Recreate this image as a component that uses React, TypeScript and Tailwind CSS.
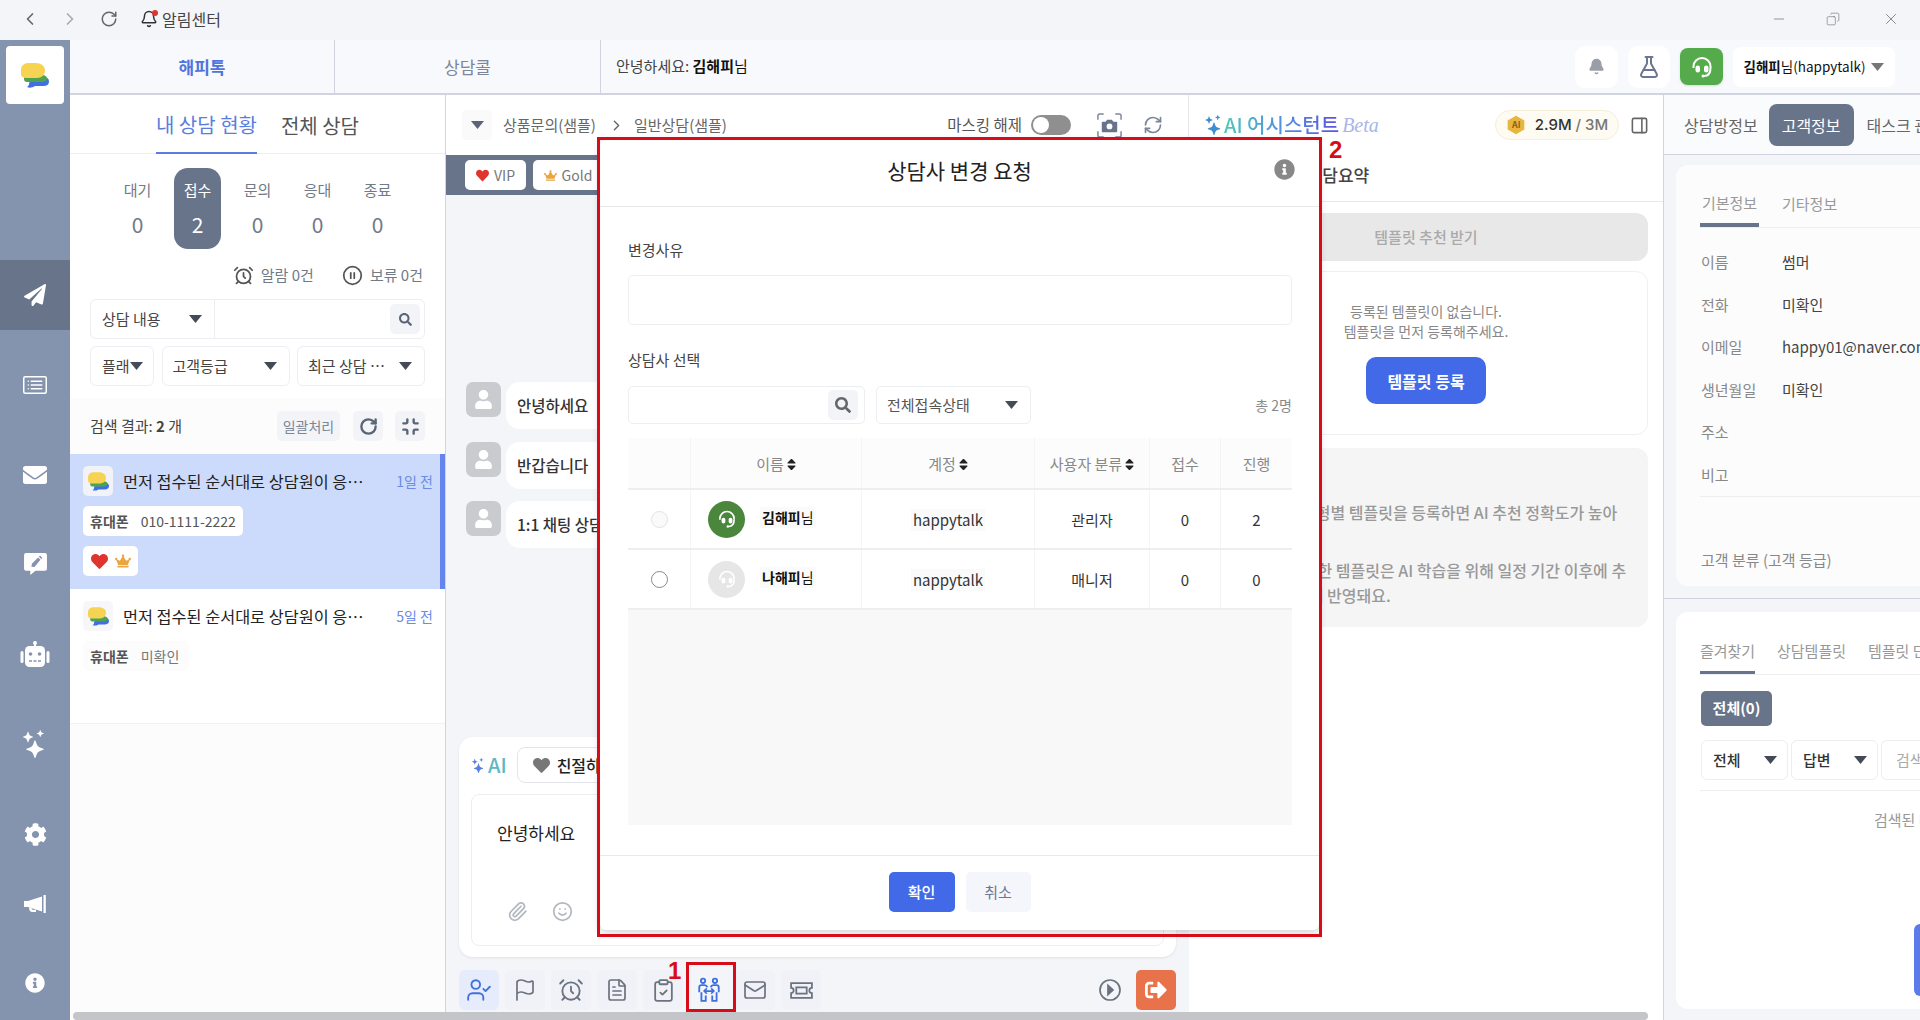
import {
  AlarmClock,
  ChevronLeft,
  ChevronRight,
  ClipboardCheck,
  Copy,
  FileText,
  Flag,
  FlaskConical,
  Mail,
  Minimize,
  Minus,
  Paperclip,
  PanelRight,
  RefreshCw,
  RotateCw,
  Smile,
  UserCheck,
  X,
  CirclePause,
  Bell,
} from "lucide-react";
import {
  FaCog,
  FaCrown,
  FaEnvelope,
  FaHeart,
  FaInfoCircle,
  FaPaperPlane,
  FaSearch,
  FaSignOutAlt,
  FaSortDown,
  FaSortUp,
  FaUser,
} from "react-icons/fa";
import { BsCardList, BsStars } from "react-icons/bs";

function Logo({ className }: { className?: string }) {
  return (
    <svg viewBox="0 0 28 25" className={className}>
      <path d="M10 14h12c4 0 6 1.500 6 4.500S26 23 22 23h-8c-3 2-6 2-8 1 1.500-1 2-2 2-3z" fill="#3f6fe0" />
      <path d="M3 12h18c3 0 5 1.500 5 3.500 0 2.500-2.500 3.500-5 3.500H6c-2 0-3-1-3-3z" fill="#4fa34f" />
      <path d="M7 0h8c5 0 9 3 9 7.500S20.500 15 16 15H5c-3 0-5-1.500-5-4V6.500C0 3 3 0 7 0z" fill="#f7d354" />
    </svg>
  );
}

function Headset({ className }: { className?: string }) {
  return (
    <svg viewBox="0 0 24 24" className={className} fill="none" stroke="currentColor" strokeWidth="2">
      <path d="M3.500 13v-1.500a8.500 8.500 0 0 1 17 0V13" />
      <rect x="5.500" y="10.500" width="4.500" height="7" rx="2.200" fill="currentColor" stroke="none" />
      <rect x="14" y="10.500" width="4.500" height="7" rx="2.200" fill="currentColor" stroke="none" />
      <path d="M20.500 13c0 5-2.500 8-6.500 8" />
      <circle cx="13" cy="21" r="1.500" fill="currentColor" stroke="none" />
    </svg>
  );
}

function Transfer({ className }: { className?: string }) {
  return (
    <svg viewBox="0 0 24 24" className={className} fill="none" stroke="currentColor" strokeWidth="1.700">
      <circle cx="6.500" cy="3.500" r="2" />
      <circle cx="17.500" cy="3.500" r="2" />
      <path d="M3 14V9.500C3 8 4 7.500 5 7.500h3c1 0 2 .5 2.500 2" />
      <path d="M21 14V9.500c0-1.500-1-2-2-2h-3c-1 0-2 .5-2.500 2" />
      <path d="M5 14v8h4v-5M19 14v8h-4v-5" />
      <path d="M7.500 13h9M10 10.500 7.500 13l2.500 2.500M14 10.500l2.500 2.500-2.500 2.500" strokeWidth="1.500" />
    </svg>
  );
}

function ChatEdit({ className }: { className?: string }) {
  return (
    <svg viewBox="0 0 24 24" className={className}>
      <path d="M3 2h18a2 2 0 0 1 2 2v13a2 2 0 0 1-2 2H12l-5 4v-4H3a2 2 0 0 1-2-2V4a2 2 0 0 1 2-2z" fill="currentColor" />
      <path d="M8 15l.7-3 5.800-5.800 2.300 2.300L11 15.300z" fill="#8594ae" />
      <path d="M15.300 5.400l1-1 2.300 2.300-1 1z" fill="#8594ae" />
    </svg>
  );
}

function Robot({ className }: { className?: string }) {
  return (
    <svg viewBox="0 0 30 28" className={className}>
      <rect x="14" y="0" width="2" height="6" fill="currentColor" />
      <circle cx="15" cy="2" r="2" fill="currentColor" />
      <rect x="5" y="5" width="20" height="21" rx="4.500" fill="currentColor" />
      <rect x="0.500" y="10" width="3" height="12" rx="1.500" fill="currentColor" />
      <rect x="26.500" y="10" width="3" height="12" rx="1.500" fill="currentColor" />
      <circle cx="10.500" cy="13" r="1.800" fill="#8594ae" />
      <circle cx="19.500" cy="13" r="1.800" fill="#8594ae" />
      <path d="M9 20h3M13.500 20h3M18 20h3" stroke="#8594ae" strokeWidth="1.300" />
    </svg>
  );
}

function Megaphone({ className }: { className?: string }) {
  return (
    <svg viewBox="0 0 24 20" className={className} fill="currentColor">
      <path d="M1 7h4L19 2.500v15L5 13H1z" />
      <rect x="20.500" y="1" width="2.300" height="18" />
      <path d="M6 13.500h2.500c0 1.500.7 2.300 2 2.500l2.500-.4V18H9.500C7 18 6 16 6 13.500z" />
    </svg>
  );
}

function TicketIcon({ className }: { className?: string }) {
  return (
    <svg viewBox="0 0 24 24" className={className} fill="none" stroke="currentColor" strokeWidth="1.700">
      <path d="M2 5h20v4.500a2.500 2.500 0 0 0 0 5V19H2v-4.500a2.500 2.500 0 0 0 0-5z" />
      <rect x="7" y="9" width="10" height="6" />
    </svg>
  );
}

function CameraFrame({ className }: { className?: string }) {
  return (
    <svg viewBox="0 0 28 28" className={className}>
      <path d="M2 8V4a2 2 0 0 1 2-2h4M20 2h4a2 2 0 0 1 2 2v4M26 20v4a2 2 0 0 1-2 2h-4M8 26H4a2 2 0 0 1-2-2v-4" fill="none" stroke="#7c8698" strokeWidth="1.500" />
      <path d="M7 10h3l1.500-2h5l1.500 2h3a1 1 0 0 1 1 1v9a1 1 0 0 1-1 1H7a1 1 0 0 1-1-1v-9a1 1 0 0 1 1-1z" fill="#67748a" />
      <circle cx="14" cy="15" r="3" fill="#fff" />
    </svg>
  );
}

function Caret({ className = "text-[#444b57]" }: { className?: string }) {
  return (
    <svg viewBox="0 0 13 8" className={`h-[8px] w-[13px] shrink-0 ${className}`}>
      <path d="M0 0h13L6.500 8z" fill="currentColor" />
    </svg>
  );
}

function Sort() {
  return (
    <span className="relative ml-[3px] inline-block h-[15px] w-[9px] text-[#222]">
      <FaSortUp className="absolute inset-0 h-[15px] w-[9px]" />
      <FaSortDown className="absolute inset-0 h-[15px] w-[9px]" />
    </span>
  );
}

function ToolButton({ children, active }: { children: React.ReactNode; active?: boolean }) {
  return (
    <div
      className={`flex h-[40px] w-[40px] items-center justify-center rounded-[6px] ${
        active ? "bg-[#e6ecfb] text-[#3f6fe0]" : "bg-[#f1f2f7] text-[#6b7280]"
      }`}
    >
      {children}
    </div>
  );
}

function Sidebar() {
  const item = "flex h-[70px] items-center justify-center text-white";
  return (
    <aside className="flex w-[70px] shrink-0 flex-col bg-[#8594ae]">
      <div className="mx-[6px] mt-[6px] flex h-[58px] w-[58px] items-center justify-center rounded-[4px] bg-white">
        <Logo className="h-[25px] w-[28px]" />
      </div>
      <div className={`${item} mt-[156px] bg-[#67748a]`}>
        <FaPaperPlane className="h-[22px] w-[22px]" />
      </div>
      <div className={`${item} mt-[20px]`}>
        <BsCardList className="h-[24px] w-[24px]" />
      </div>
      <div className={`${item} mt-[20px]`}>
        <FaEnvelope className="h-[24px] w-[24px]" />
      </div>
      <div className={`${item} mt-[18px]`}>
        <ChatEdit className="h-[25px] w-[25px]" />
      </div>
      <div className={`${item} mt-[22px]`}>
        <Robot className="h-[28px] w-[30px]" />
      </div>
      <div className={`${item} mt-[19px]`}>
        <BsStars className="h-[28px] w-[28px]" />
      </div>
      <div className={`${item} mt-[20px]`}>
        <FaCog className="h-[23px] w-[23px]" />
      </div>
      <div className={`${item} mt-[0px]`}>
        <Megaphone className="h-[20px] w-[24px]" />
      </div>
      <div className={`${item} mt-[9px]`}>
        <FaInfoCircle className="h-[20px] w-[20px]" />
      </div>
    </aside>
  );
}

function TopNav() {
  return (
    <div className="flex h-[55px] shrink-0 border-b-2 border-[#cfd4df] bg-[#f8f9fc]">
      <div className="flex w-[265px] items-center justify-center border-r border-[#cfd4df] text-[17px] font-bold text-[#4f74dc]">
        해피톡
      </div>
      <div className="flex w-[266px] items-center justify-center border-r border-[#cfd4df] text-[17px] text-[#7c8698]">
        상담콜
      </div>
      <div className="flex flex-1 items-center pl-[15px] text-[15px] text-[#444]">
        안녕하세요:&nbsp;<b className="text-[#111]">김해피</b>
        <span className="text-[#111]">님</span>
      </div>
      <div className="flex items-center gap-[10px] pr-[25px]">
        <div className="flex h-[42px] w-[43px] items-center justify-center rounded-[10px] bg-white">
          <Bell className="h-[17px] w-[17px] fill-[#9a9ea6] text-[#9a9ea6]" />
        </div>
        <div className="flex h-[42px] w-[42px] items-center justify-center rounded-[10px] bg-white">
          <FlaskConical className="h-[24px] w-[24px] text-[#6b7790]" />
        </div>
        <div className="flex h-[37px] w-[43px] items-center justify-center rounded-[8px] bg-[#55ab4c] text-white shadow">
          <Headset className="h-[24px] w-[24px]" />
        </div>
        <div className="flex h-[40px] w-[162px] items-center justify-center gap-[6px] rounded-[8px] bg-white text-[13.500px] text-[#111]">
          <span>
            <b>김해피</b>님(happytalk)
          </span>
          <Caret className="text-[#777]" />
        </div>
      </div>
    </div>
  );
}

function LeftPanel() {
  const box = "flex h-[40px] items-center rounded-[6px] border border-[#eceef2] bg-white text-[15px] text-[#444]";
  return (
    <section className="flex w-[376px] shrink-0 flex-col border-r border-[#cfd4df] bg-white">
      <div className="flex h-[59px] justify-center gap-[24px] border-b border-[#eceef2]">
        <div className="flex h-[59px] items-center border-b-2 border-[#5a7ee0] pt-[3px] text-[20px] text-[#5a7ee0]">
          내 상담 현황
        </div>
        <div className="flex h-[59px] items-center pt-[3px] text-[20px] text-[#555]">전체 상담</div>
      </div>

      <div className="mt-[14px] flex justify-center gap-[13px]">
        {[
          ["대기", "0"],
          ["접수", "2"],
          ["문의", "0"],
          ["응대", "0"],
          ["종료", "0"],
        ].map(([label, count], i) => (
          <div
            key={label}
            className={`flex h-[81px] w-[47px] flex-col items-center justify-center gap-[10px] rounded-[14px] ${
              i === 1 ? "bg-[#67748a] text-white" : "text-[#717a87]"
            }`}
          >
            <span className="text-[15px] leading-[20px]">{label}</span>
            <span className="text-[21px] leading-[28px]">{count}</span>
          </div>
        ))}
      </div>

      <div className="mt-[14px] flex h-[24px] items-center justify-end gap-[28px] pr-[22px] text-[15px] text-[#717a87]">
        <span className="flex items-center gap-[7px]">
          <AlarmClock className="h-[21px] w-[21px] text-[#555]" />
          알람 0건
        </span>
        <span className="flex items-center gap-[7px]">
          <CirclePause className="h-[21px] w-[21px] text-[#555]" />
          보류 0건
        </span>
      </div>

      <div className={`mx-[20px] mt-[12px] ${box}`}>
        <div className="flex h-full w-[124px] items-center justify-between border-r border-[#eceef2] pl-[11px] pr-[12px]">
          상담 내용
          <Caret />
        </div>
        <div className="ml-auto mr-[4px] flex h-[30px] w-[30px] items-center justify-center rounded-[5px] bg-[#f3f4f7] text-[#5a6678]">
          <FaSearch className="h-[13px] w-[13px]" />
        </div>
      </div>

      <div className="mx-[20px] mt-[7px] flex justify-between">
        <div className={`${box} w-[64px] pl-[11px]`}>
          플래
          <Caret />
        </div>
        <div className={`${box} w-[128px] justify-between pl-[10px] pr-[12px]`}>
          고객등급
          <Caret />
        </div>
        <div className={`${box} w-[128px] justify-between pl-[10px] pr-[12px]`}>
          최근 상담 …
          <Caret />
        </div>
      </div>

      <div className="mt-[12px] flex h-[56px] items-center bg-[#fcfcfc] pl-[20px] pr-[20px] text-[15px] text-[#444]">
        <span>
          검색 결과: <b>2</b> 개
        </span>
        <div className="ml-auto flex h-[30px] w-[63px] items-center justify-center rounded-[5px] bg-[#f3f4f7] text-[14px] text-[#7c8698]">
          일괄처리
        </div>
        <div className="ml-[13px] flex h-[30px] w-[30px] items-center justify-center rounded-[5px] bg-[#f3f4f7] text-[#5a6678]">
          <RotateCw className="h-[19px] w-[19px]" strokeWidth={3} />
        </div>
        <div className="ml-[12px] flex h-[30px] w-[30px] items-center justify-center rounded-[5px] bg-[#f3f4f7] text-[#5a6678]">
          <Minimize className="h-[19px] w-[19px]" strokeWidth={3} />
        </div>
      </div>

      <div className="h-[135px] border-r-[5px] border-[#6484ee] bg-[#ccdbfb] pl-[13px] pr-[7px] pt-[12px]">
        <div className="flex h-[30px] items-center">
          <div className="flex h-[30px] w-[30px] items-center justify-center rounded-[5px] bg-[#f1f3f8]">
            <Logo className="h-[19px] w-[21px]" />
          </div>
          <span className="ml-[10px] text-[16.300px] text-[#222]">먼저 접수된 순서대로 상담원이 응…</span>
          <span className="ml-auto text-[14px] text-[#6a8be6]">1일 전</span>
        </div>
        <div className="mt-[10px] flex h-[30px] w-[160px] items-center rounded-[5px] bg-white pl-[7px] text-[14px] text-[#555]">
          <b>휴대폰</b>
          <span className="ml-[12px]">010-1111-2222</span>
        </div>
        <div className="mt-[10px] flex h-[30px] w-[55px] items-center justify-center gap-[7px] rounded-[5px] bg-white">
          <FaHeart className="h-[17px] w-[17px] text-[#e0352f]" />
          <FaCrown className="h-[16px] w-[16px] text-[#e9a640]" />
        </div>
      </div>

      <div className="h-[135px] border-b border-[#f0f1f4] pl-[13px] pr-[12px] pt-[12px]">
        <div className="flex h-[30px] items-center">
          <div className="flex h-[30px] w-[30px] items-center justify-center rounded-[5px] bg-[#f7f7f9]">
            <Logo className="h-[19px] w-[21px]" />
          </div>
          <span className="ml-[10px] text-[16.300px] text-[#222]">먼저 접수된 순서대로 상담원이 응…</span>
          <span className="ml-auto text-[14px] text-[#6a8be6]">5일 전</span>
        </div>
        <div className="mt-[10px] flex h-[30px] w-[106px] items-center rounded-[5px] bg-[#fcfcfc] pl-[7px] text-[14px] text-[#555]">
          <b>휴대폰</b>
          <span className="ml-[12px] text-[#777]">미확인</span>
        </div>
      </div>
      <div className="flex-1 bg-[#fcfcfc]" />
    </section>
  );
}

function ChatRow({ text, mt }: { text: string; mt: string }) {
  return (
    <div className={`flex gap-[5px] ${mt}`}>
      <div className="flex h-[35px] w-[35px] items-center justify-center rounded-[7px] bg-[#c9cbcf] text-white">
        <FaUser className="h-[19px] w-[19px]" />
      </div>
      <div className="flex h-[47px] w-[160px] items-center whitespace-nowrap rounded-[14px] bg-white pl-[11px] text-[15.500px] font-medium text-[#333]">
        {text}
      </div>
    </div>
  );
}

function CenterPanel() {
  return (
    <section className="flex w-[743px] shrink-0 flex-col bg-[#f3f5f9]">
      <div className="flex h-[60px] shrink-0 items-center border-r border-[#e6e8ec] bg-white pl-[16px] pr-[25px] text-[15px] text-[#666]">
        <div className="flex h-[30px] w-[30px] items-center justify-center rounded-[4px] bg-[#fafafa]">
          <Caret className="text-[#5a6678]" />
        </div>
        <span className="ml-[11px]">상품문의(샘플)</span>
        <ChevronRight className="ml-[12px] h-[17px] w-[17px] text-[#666]" />
        <span className="ml-[9px]">일반상담(샘플)</span>
        <span className="ml-auto text-[15.500px] text-[#555]">마스킹 해제</span>
        <div className="ml-[9px] flex h-[20px] w-[40px] items-center rounded-full bg-[#8f8f8f] pl-[2px]">
          <div className="h-[16px] w-[16px] rounded-full bg-white" />
        </div>
        <CameraFrame className="ml-[25px] h-[27px] w-[27px]" />
        <RefreshCw className="ml-[20px] h-[20px] w-[20px] text-[#7c8698]" />
      </div>
      <div className="flex h-[40px] shrink-0 items-center gap-[7px] bg-[#67748a] pl-[19px]">
        <div className="flex h-[30px] w-[61px] items-center justify-center gap-[5px] rounded-[5px] bg-white text-[14px] text-[#777]">
          <FaHeart className="h-[13px] w-[13px] text-[#e0352f]" />
          VIP
        </div>
        <div className="flex h-[30px] w-[70px] items-center justify-center gap-[5px] rounded-[5px] bg-white text-[14px] text-[#777]">
          <FaCrown className="h-[13px] w-[13px] text-[#e9a640]" />
          Gold
        </div>
      </div>
      <div className="flex-1 pl-[20px] pt-[187px]">
        <ChatRow text="안녕하세요" mt="" />
        <ChatRow text="반갑습니다" mt="mt-[13px]" />
        <ChatRow text="1:1 채팅 상담" mt="mt-[12px]" />
      </div>
      <div className="mx-[13px] h-[220px] rounded-[14px] bg-white px-[12px] pt-[10px] shadow-[0_1px_3px_rgba(0,0,0,0.08)]">
        <div className="flex h-[36px] items-center">
          <BsStars className="h-[15px] w-[15px] text-[#5a7ee0]" />
          <span className="ml-[2px] text-[20px] font-medium text-[#5db7c4]">AI</span>
          <div className="ml-[10px] flex h-[36px] w-[120px] items-center gap-[7px] rounded-[8px] border border-[#e3e5ea] pl-[15px] text-[16px] font-medium text-[#222]">
            <FaHeart className="h-[17px] w-[17px] text-[#777]" />
            친절하게
          </div>
        </div>
        <div className="mt-[11px] h-[152px] rounded-[8px] border border-[#eceef2] pl-[25px] pt-[25px]">
          <div className="text-[17px] text-[#222]">안녕하세요</div>
          <div className="ml-[10px] mt-[55px] flex gap-[24px] text-[#b3b7bf]">
            <Paperclip className="h-[21px] w-[21px]" />
            <Smile className="h-[21px] w-[21px]" />
          </div>
        </div>
      </div>
      <div className="mb-[10px] mt-[13px] flex h-[40px] items-center gap-[6px] pl-[13px] pr-[13px]">
        <ToolButton active>
          <UserCheck className="h-[26px] w-[26px]" strokeWidth={1.7} />
        </ToolButton>
        <ToolButton>
          <Flag className="h-[24px] w-[24px]" strokeWidth={1.7} />
        </ToolButton>
        <ToolButton>
          <AlarmClock className="h-[26px] w-[26px]" strokeWidth={1.7} />
        </ToolButton>
        <ToolButton>
          <FileText className="h-[24px] w-[24px]" strokeWidth={1.7} />
        </ToolButton>
        <ToolButton>
          <ClipboardCheck className="h-[25px] w-[25px]" strokeWidth={1.7} />
        </ToolButton>
        <div className="flex h-[40px] w-[40px] items-center justify-center text-[#3f6fe0]">
          <Transfer className="h-[26px] w-[26px]" />
        </div>
        <ToolButton>
          <Mail className="h-[24px] w-[24px]" strokeWidth={1.7} />
        </ToolButton>
        <ToolButton>
          <TicketIcon className="h-[25px] w-[25px]" />
        </ToolButton>
        <div className="ml-auto flex h-[40px] w-[40px] items-center justify-center rounded-[6px] text-[#6b7280]">
          <svg viewBox="0 0 24 24" className="h-[24px] w-[24px]" fill="none" stroke="currentColor" strokeWidth="1.700">
            <circle cx="12" cy="12" r="10" />
            <path d="M10 7.500 15 12l-5 4.500z" fill="currentColor" />
          </svg>
        </div>
        <div className="flex h-[40px] w-[40px] items-center justify-center rounded-[5px] bg-[#e8734a] text-white">
          <FaSignOutAlt className="h-[22px] w-[22px]" />
        </div>
      </div>
    </section>
  );
}

function AiPanel() {
  return (
    <section className="flex w-[475px] shrink-0 flex-col border-r border-[#cfd4df] bg-white">
      <div className="flex h-[60px] shrink-0 items-center pl-[15px] pr-[14px]">
        <BsStars className="h-[20px] w-[20px] text-[#3f8fd0]" />
        <span className="bg-gradient-to-r from-[#50c8b4] via-[#4f8fe0] to-[#5b4fe0] bg-clip-text text-[20px] font-medium text-transparent">
          AI 어시스턴트
        </span>
        <span className="ml-[3px] font-[family-name:'Liberation_Serif',serif] text-[20px] italic text-[#a9b6e6]">
          Beta
        </span>
        <div className="ml-auto flex h-[30px] w-[124px] items-center justify-center gap-[9px] rounded-full border border-[#f5eedb] bg-[#fefbf2] font-[family-name:Inter,sans-serif] text-[15px] font-medium text-[#333]">
          <svg viewBox="0 0 24 24" className="h-[20px] w-[20px]">
            <polygon points="12,1 22,6.500 22,17.500 12,23 2,17.500 2,6.500" fill="#e8b53f" />
            <text x="12" y="16" textAnchor="middle" fontSize="10" fontWeight="700" fill="#8a6410">
              AI
            </text>
          </svg>
          <span>
            2.9M <span className="text-[#777]">/ 3M</span>
          </span>
        </div>
        <PanelRight className="ml-[11px] h-[19px] w-[19px] text-[#666]" />
      </div>
      <div className="flex h-[47px] shrink-0 items-center border-b border-[#e6e8ec] pb-[6px] pl-[98px] text-[17px] font-medium text-[#444]">
        AI 상담요약
      </div>
      <div className="mx-[15px] mt-[11px] flex h-[48px] items-center justify-center rounded-[12px] bg-[#e8e8e8] text-[15px] font-medium text-[#aaa]">
        템플릿 추천 받기
      </div>
      <div className="mx-[15px] mt-[10px] flex h-[164px] flex-col items-center rounded-[12px] border border-[#eff0f3] pt-[29px] text-[14px] leading-[20px] text-[#888]">
        <div>등록된 템플릿이 없습니다.</div>
        <div>템플릿을 먼저 등록해주세요.</div>
        <div className="mt-[16px] flex h-[47px] w-[120px] items-center justify-center rounded-[10px] bg-[#4169e8] text-[16px] font-bold text-white">
          템플릿 등록
        </div>
      </div>
      <div className="mx-[15px] mt-[13px] h-[179px] rounded-[12px] bg-[#f5f5f6] pt-[52px] text-[16px] font-medium leading-[25px] text-[#999]">
        <div className="whitespace-nowrap pl-[64px]">상담 유형별 템플릿을 등록하면 AI 추천 정확도가 높아</div>
        <div className="h-[33px] pl-[64px]">져요.</div>
        <div className="whitespace-nowrap pl-[51px]">새로 등록한 템플릿은 AI 학습을 위해 일정 기간 이후에 추</div>
        <div className="pl-[90px]">천에 반영돼요.</div>
      </div>
    </section>
  );
}

function RightPanel() {
  const rows = [
    ["이름", "썸머"],
    ["전화", "미확인"],
    ["이메일", "happy01@naver.com"],
    ["생년월일", "미확인"],
    ["주소", ""],
    ["비고", ""],
  ];
  const sel = "flex h-[40px] w-[87px] shrink-0 items-center justify-between rounded-[6px] border border-[#eceef2] bg-white pl-[11px] pr-[10px] text-[15px] font-medium text-[#333]";
  return (
    <section className="flex min-w-0 flex-1 flex-col overflow-hidden bg-[#f3f5f9]">
      <div className="flex h-[60px] shrink-0 items-center border-b border-[#cfd4df] bg-[#fafbfc] pl-[20px] text-[16px] text-[#666]">
        <span className="whitespace-nowrap">상담방정보</span>
        <div className="ml-[11px] flex h-[42px] w-[85px] shrink-0 items-center justify-center rounded-[8px] bg-[#67748a] text-white">
          고객정보
        </div>
        <span className="ml-[13px] whitespace-nowrap">태스크 관리</span>
      </div>
      <div className="ml-[12px] mt-[10px] h-[421px] shrink-0 rounded-l-[12px] bg-[#fcfcfd] pl-[24px]">
        <div className="flex h-[63px] items-end gap-[23px] border-b border-[#eceef2] text-[15px] text-[#999]">
          <span className="flex h-[40px] w-[59px] items-center justify-center border-b-4 border-[#67748a] pb-[3px]">기본정보</span>
          <span className="flex h-[40px] items-center pb-[6px]">기타정보</span>
        </div>
        <div className="mt-[13px] border-b border-[#eceef2]">
          {rows.map(([label, value]) => (
            <div key={label} className="flex h-[42.500px] items-center whitespace-nowrap text-[15px]">
              <span className="w-[82px] shrink-0 pl-[1px] text-[#888]">{label}</span>
              <span className="text-[#444]">{value}</span>
            </div>
          ))}
        </div>
        <div className="mt-[52px] pl-[1px] text-[15px] text-[#888]">고객 분류 (고객 등급)</div>
      </div>
      <div className="mt-[12px] border-t border-[#cfd4df]" />
      <div className="ml-[12px] mt-[13px] h-[397px] shrink-0 rounded-l-[12px] bg-white pl-[24px]">
        <div className="flex h-[63px] items-end gap-[22px] whitespace-nowrap border-b border-[#eceef2] text-[15px] text-[#999]">
          <span className="flex h-[40px] w-[55px] items-center justify-center border-b-[3px] border-[#67748a] pb-[3px]">즐겨찾기</span>
          <span className="flex h-[40px] items-center pb-[6px]">상담템플릿</span>
          <span className="flex h-[40px] items-center pb-[6px]">템플릿 단축키</span>
        </div>
        <div className="ml-[1px] mt-[16px] flex h-[35px] w-[71px] items-center justify-center rounded-[5px] bg-[#67748a] text-[15px] font-bold text-white">
          전체(0)
        </div>
        <div className="ml-[1px] mt-[14px] flex gap-[3px] whitespace-nowrap">
          <div className={sel}>
            전체
            <Caret />
          </div>
          <div className={sel}>
            답변
            <Caret />
          </div>
          <div className="flex h-[40px] w-[80px] shrink-0 items-center overflow-hidden rounded-[6px] border border-[#eceef2] pl-[14px] text-[15px] text-[#aaa]">
            검색어를 입력
          </div>
        </div>
        <div className="mt-[10px] border-t border-[#eceef2] pl-[174px] pt-[18px] text-[15px] whitespace-nowrap text-[#999]">
          검색된 내용이 없습니다.
        </div>
      </div>
    </section>
  );
}

function Modal() {
  const cols = "grid grid-cols-[63px_171px_173px_115px_71px_71px]";
  const cell = "flex items-center justify-center border-r border-[#f4f4f6]";
  const textCell = `${cell} pt-[2px]`;
  const agents = [
    { name: "김해피", id: "happytalk", role: "관리자", a: "0", b: "2", on: true },
    { name: "나해피", id: "nappytalk", role: "매니저", a: "0", b: "0", on: false },
  ];
  return (
    <div className="absolute left-[600px] top-[140px] flex h-[790px] w-[719px] flex-col rounded-[6px] bg-white shadow-[0_2px_8px_rgba(0,0,0,0.2)]">
      <div className="relative flex h-[67px] shrink-0 items-center justify-center border-b border-[#e6e8ec] pb-[4px] text-[21px] text-[#222]">
        상담사 변경 요청
        <FaInfoCircle className="absolute right-[24px] top-[19px] h-[21px] w-[21px] text-[#888]" />
      </div>
      <div className="flex flex-1 flex-col pl-[28px] pr-[27px] pt-[33px]">
        <div className="text-[15px] leading-[20px] text-[#444]">변경사유</div>
        <div className="mt-[15px] h-[50px] shrink-0 rounded-[5px] border border-[#eceef2]" />
        <div className="mt-[25px] text-[15px] leading-[20px] text-[#444]">상담사 선택</div>
        <div className="mt-[16px] flex h-[38px] shrink-0 items-center">
          <div className="flex h-[38px] w-[237px] items-center justify-end rounded-[5px] border border-[#eceef2] pr-[6px]">
            <div className="flex h-[30px] w-[30px] items-center justify-center rounded-[5px] bg-[#f3f4f7] text-[#666]">
              <FaSearch className="h-[16px] w-[16px]" />
            </div>
          </div>
          <div className="ml-[11px] flex h-[38px] w-[155px] items-center justify-between rounded-[5px] border border-[#eceef2] pl-[10px] pr-[12px] text-[15px] text-[#555]">
            전체접속상태
            <Caret />
          </div>
          <span className="ml-auto text-[14px] text-[#888]">총 2명</span>
        </div>
        <div className={`${cols} mt-[14px] h-[52px] shrink-0 border-b-2 border-[#eceef0] bg-[#fcfcfd] text-[15px] text-[#888]`}>
          <div className={cell} />
          <div className={textCell}>
            이름
            <Sort />
          </div>
          <div className={textCell}>
            계정
            <Sort />
          </div>
          <div className={textCell}>
            사용자 분류
            <Sort />
          </div>
          <div className={textCell}>접수</div>
          <div className="flex items-center justify-center pt-[2px]">진행</div>
        </div>
        {agents.map((row) => (
          <div key={row.id} className={`${cols} h-[60px] shrink-0 border-b-2 border-[#eceef0] text-[15px] text-[#333]`}>
            <div className={cell}>
              <div className={`h-[17px] w-[17px] rounded-full border ${row.on ? "border-[#e3e3e6] bg-[#fafafa]" : "border-[#888]"}`} />
            </div>
            <div className={`${cell} justify-start pl-[17px]`}>
              <div
                className={`flex h-[37px] w-[37px] items-center justify-center rounded-full ${
                  row.on ? "bg-[#4a863c] text-white" : "bg-[#e6e6e6] text-white"
                }`}
              >
                <Headset className="h-[20px] w-[20px]" />
              </div>
              <span className="ml-[15px] mb-[4px] bg-[#fafafb] px-[2px] text-[14px] text-[#111]">
                <b>{row.name}</b>님
              </span>
            </div>
            <div className={textCell}>
              <span className="bg-[#fafafb] px-[2px]">{row.id}</span>
            </div>
            <div className={textCell}>{row.role}</div>
            <div className={textCell}>{row.a}</div>
            <div className="flex items-center justify-center pt-[2px]">{row.b}</div>
          </div>
        ))}
        <div className="h-[215px] shrink-0 bg-[#f8f8f9]" />
      </div>
      <div className="flex h-[75px] shrink-0 items-start justify-center gap-[11px] border-t border-[#e6e8ec] pt-[16px] text-[15px]">
        <div className="flex h-[40px] w-[66px] items-center justify-center rounded-[5px] bg-[#4169e8] font-medium text-white">확인</div>
        <div className="flex h-[40px] w-[65px] items-center justify-center rounded-[5px] bg-[#f5f6fb] text-[#6b7790]">취소</div>
      </div>
    </div>
  );
}

function BellDot() {
  return (
    <span className="relative block h-[18px] w-[18px]">
      <Bell className="h-[18px] w-[18px] text-[#333]" />
      <span className="absolute right-0 top-0 h-[6px] w-[6px] rounded-full bg-[#e0352f]" />
    </span>
  );
}

export default function App() {
  return (
    <div className="relative flex h-[1020px] w-[1920px] flex-col overflow-hidden bg-white font-[family-name:'Noto_Sans_CJK_KR','Noto_Sans',sans-serif]">
      <header className="flex h-[40px] shrink-0 items-center bg-[#f4f5f8] pb-[2px] text-[#666]">
        <ChevronLeft className="ml-[20px] h-[20px] w-[20px]" />
        <ChevronRight className="ml-[20px] h-[20px] w-[20px] text-[#aaa]" />
        <RotateCw className="ml-[20px] h-[18px] w-[18px]" />
        <span className="ml-[22px]">
          <BellDot />
        </span>
        <span className="ml-[4px] text-[16px] text-[#444]">알림센터</span>
        <Minus className="ml-auto h-[16px] w-[16px]" strokeWidth={1} />
        <Copy className="ml-[39px] h-[14px] w-[14px] -scale-x-100" strokeWidth={1} />
        <X className="ml-[42px] mr-[20px] h-[18px] w-[18px]" strokeWidth={1} />
      </header>
      <div className="flex min-h-0 flex-1">
        <Sidebar />
        <div className="flex min-w-0 flex-1 flex-col">
          <TopNav />
          <div className="flex min-h-0 flex-1">
            <LeftPanel />
            <CenterPanel />
            <AiPanel />
            <RightPanel />
          </div>
        </div>
      </div>

      <Modal />
      {/* red annotation marks lie over the page */}
      <div className="pointer-events-none absolute left-[597px] top-[137px] h-[800px] w-[725px] border-[3px] border-[#d80c18]" />
      <div className="pointer-events-none absolute left-[686px] top-[962px] h-[50px] w-[50px] border-[3px] border-[#d80c18]" />
      <span className="absolute left-[668px] top-[958px] font-[family-name:'Liberation_Sans',sans-serif] text-[24px] font-bold leading-[26px] text-[#d80c18]">1</span>
      <span className="absolute left-[1329px] top-[137px] font-[family-name:'Liberation_Sans',sans-serif] text-[24px] font-bold leading-[26px] text-[#d80c18]">2</span>
      <div className="absolute bottom-0 left-[73px] h-[8px] w-[1575px] rounded-full bg-[#c4c5c8]" />
      <div className="absolute right-0 top-[924px] h-[72px] w-[6px] rounded-l-[8px] bg-[#5b7be8]" />
    </div>
  );
}
